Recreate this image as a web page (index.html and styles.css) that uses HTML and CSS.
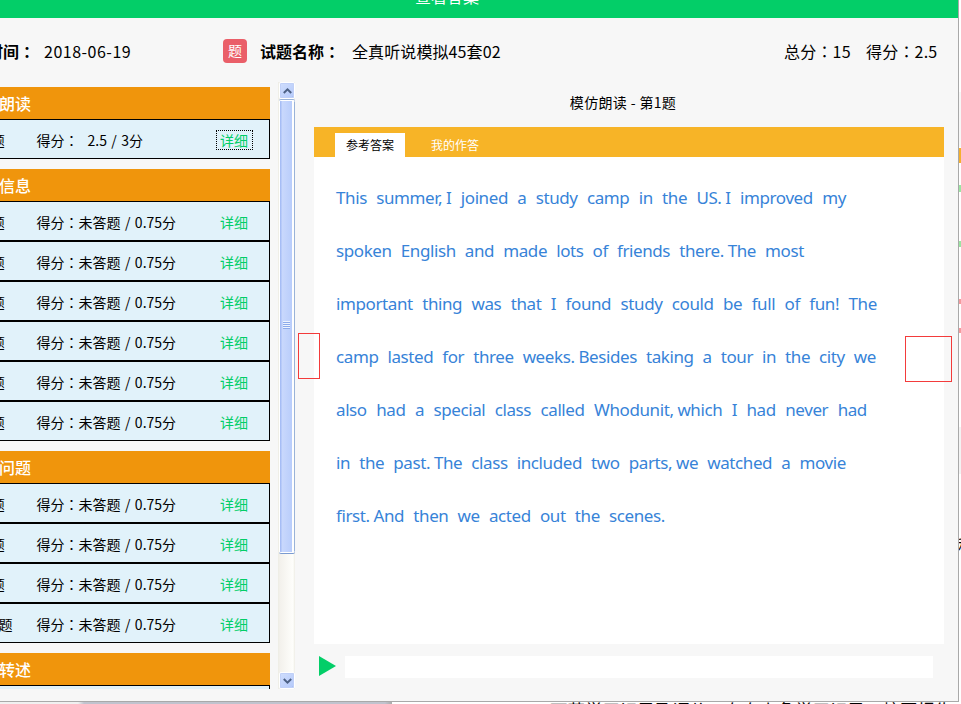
FILE: index.html
```html
<!DOCTYPE html>
<html lang="zh-CN">
<head>
<meta charset="utf-8">
<title>查看答案</title>
<link rel="stylesheet" href="styles.css">
</head>
<body>
<div class="window">
  <header class="titlebar"><span>查看答案</span></header>
  <div class="info">
    <b class="time-label">时间<i class="colon" lang="zh-TW">：</i></b>
    <span class="date">2018-06-19</span>
    <span class="badge">题</span>
    <b class="name-label">试题名称<i class="colon" lang="zh-TW">：</i></b>
    <span class="name">全真听说模拟45套02</span>
    <span class="total">总分<i class="colon" lang="zh-TW">：</i>15</span>
    <span class="got">得分<i class="colon" lang="zh-TW">：</i>2.5</span>
  </div>
  <div class="content">
    <div class="list">
      <section class="group">
        <h2>模仿朗读</h2>
        <div class="row"><span class="no">第1题</span><span class="score">得分<i class="colon" lang="zh-TW">：</i><span class="value">2.5 / 3分</span></span><a class="link focused">详细</a></div>
      </section>
      <section class="group">
        <h2>获取信息</h2>
        <div class="row"><span class="no">第1题</span><span class="score">得分<i class="colon" lang="zh-TW">：</i>未答题 / 0.75分</span><a class="link">详细</a></div>
        <div class="row"><span class="no">第2题</span><span class="score">得分<i class="colon" lang="zh-TW">：</i>未答题 / 0.75分</span><a class="link">详细</a></div>
        <div class="row"><span class="no">第3题</span><span class="score">得分<i class="colon" lang="zh-TW">：</i>未答题 / 0.75分</span><a class="link">详细</a></div>
        <div class="row"><span class="no">第4题</span><span class="score">得分<i class="colon" lang="zh-TW">：</i>未答题 / 0.75分</span><a class="link">详细</a></div>
        <div class="row"><span class="no">第5题</span><span class="score">得分<i class="colon" lang="zh-TW">：</i>未答题 / 0.75分</span><a class="link">详细</a></div>
        <div class="row"><span class="no">第6题</span><span class="score">得分<i class="colon" lang="zh-TW">：</i>未答题 / 0.75分</span><a class="link">详细</a></div>
      </section>
      <section class="group">
        <h2>回答问题</h2>
        <div class="row"><span class="no">第7题</span><span class="score">得分<i class="colon" lang="zh-TW">：</i>未答题 / 0.75分</span><a class="link">详细</a></div>
        <div class="row"><span class="no">第8题</span><span class="score">得分<i class="colon" lang="zh-TW">：</i>未答题 / 0.75分</span><a class="link">详细</a></div>
        <div class="row"><span class="no">第9题</span><span class="score">得分<i class="colon" lang="zh-TW">：</i>未答题 / 0.75分</span><a class="link">详细</a></div>
        <div class="row"><span class="no">第10题</span><span class="score">得分<i class="colon" lang="zh-TW">：</i>未答题 / 0.75分</span><a class="link">详细</a></div>
      </section>
      <section class="group">
        <h2>信息转述</h2>
        <div class="row"></div>
      </section>
    </div>
    <div class="scrollbar">
      <div class="sb-btn"><svg width="9" height="6" viewBox="0 0 9 6"><path d="M.8 5 4.5 1.4 8.2 5" fill="none" stroke="#4d6185" stroke-width="2"/></svg></div>
      <div class="thumb"><div class="grip"></div></div>
      <div class="track"></div>
      <div class="sb-btn"><svg width="9" height="6" viewBox="0 0 9 6"><path d="M.8 1 4.5 4.6 8.2 1" fill="none" stroke="#4d6185" stroke-width="2"/></svg></div>
    </div>
    <main class="detail">
      <h1>模仿朗读 - 第1题</h1>
      <nav class="tabs"><span class="tab active">参考答案</span><span class="tab">我的作答</span></nav>
      <article class="passage">
        <p class="w1"><span>This</span><span>summer, I</span><span>joined</span><span>a</span><span>study</span><span>camp</span><span>in</span><span>the</span><span>US. I</span><span>improved</span><span>my</span></p>
        <p class="w2"><span>spoken</span><span>English</span><span>and</span><span>made</span><span>lots</span><span>of</span><span>friends</span><span>there. The</span><span>most</span></p>
        <p class="w3"><span>important</span><span>thing</span><span>was</span><span>that</span><span>I</span><span>found</span><span>study</span><span>could</span><span>be</span><span>full</span><span>of</span><span>fun!</span><span>The</span></p>
        <p class="w4"><span>camp</span><span>lasted</span><span>for</span><span>three</span><span>weeks. Besides</span><span>taking</span><span>a</span><span>tour</span><span>in</span><span>the</span><span>city</span><span>we</span></p>
        <p class="w5"><span>also</span><span>had</span><span>a</span><span>special</span><span>class</span><span>called</span><span>Whodunit, which</span><span>I</span><span>had</span><span>never</span><span>had</span></p>
        <p class="w1"><span>in</span><span>the</span><span>past. The</span><span>class</span><span>included</span><span>two</span><span>parts, we</span><span>watched</span><span>a</span><span>movie</span></p>
        <p class="w7"><span>first. And</span><span>then</span><span>we</span><span>acted</span><span>out</span><span>the</span><span>scenes.</span></p>
      </article>
      <div class="player">
        <svg width="17" height="20" viewBox="0 0 17 20"><path d="M0 0 17 10 0 20Z" fill="#03ce68"/></svg>
        <div class="progress"></div>
      </div>
    </main>
  </div>
  <div class="mark mark-left"></div>
  <div class="mark mark-right"></div>
</div>
<div class="behind-right">
  <i class="bit gray-top"></i><i class="bit orange"></i><i class="bit green"></i><i class="bit green-2"></i><i class="bit red"></i><i class="bit red-2"></i><i class="bit gray"></i><span class="side-char">程</span>
</div>
<div class="behind-bottom"><div class="taskbar"></div><div class="under-text">可获学习记录及评价，在右上角学习记录，校园报告</div></div>
</body>
</html>
```

FILE: styles.css
```css
* { box-sizing: border-box; }
body {
  margin: 0;
  width: 961px;
  height: 704px;
  overflow: hidden;
  position: relative;
  background: #fff;
  color: #000;
  font-family: "Noto Sans CJK SC", sans-serif;
}
.window {
  position: relative;
  width: 959px;
  height: 702px;
  overflow: hidden;
  background: #f7f7f7;
  border-right: 1px solid #a9a9a9;
  border-bottom: 1px solid #a9a9a9;
}
.colon { font-style: normal; font-family: "Noto Sans CJK TC", sans-serif; }

.titlebar {
  height: 18px;
  background: #03ce68;
  color: #fff;
  font-size: 16px;
  line-height: 24px;
  display: flex;
  padding-left: 415px;
  overflow: hidden;
}
.titlebar span { margin-top: -16px; }

.info {
  height: 69px;
  padding-bottom: 4px;
  display: flex;
  align-items: center;
  font-size: 16px;
  line-height: 24px;
  white-space: nowrap;
}
.time-label { margin-left: -13px; width: 57px; flex: none; }
.date { width: 179px; letter-spacing: .5px; }
.badge {
  width: 24px;
  height: 24px;
  margin-top: 0;
  border-radius: 4px;
  background: #ea5f69;
  color: #fff;
  font-size: 14px;
  line-height: 22px;
  text-align: center;
}
.name-label { margin-left: 13px; width: 92px; }
.name { width: 432px; letter-spacing: .1px; }
.total { width: 82px; letter-spacing: .2px; }
.got { letter-spacing: .2px; }

.content { display: flex; align-items: flex-start; }
.list {
  width: 270px;
  height: 602px;
  overflow: hidden;
}
.group { margin-bottom: 10px; }
.group h2 {
  margin: 0;
  height: 32px;
  background: #f0950c;
  color: #fff;
  font-size: 16px;
  font-weight: 500;
  line-height: 33px;
  text-indent: -33px;
  white-space: nowrap;
}
.row {
  height: 40px;
  border: 1px solid #000;
  border-left: 0;
  background: #e1f2fa;
  display: flex;
  align-items: center;
  font-size: 14px;
  line-height: 20px;
  white-space: nowrap;
}
.no { margin-left: -31px; width: 67.5px; padding-top: 1px; }
.score { width: 179.5px; padding-top: 1px; word-spacing: 1.3px; }
.value { margin-left: 9px; }
.link { color: #03ce68; padding: 0 3px; margin-top: 2px; border: 1px dotted transparent; height: 20px; line-height: 18px; width: 37px; }
.link.focused { border-color: #000; }

.scrollbar {
  width: 17px;
  height: 607px;
  margin: -5px 0 0 8px;
  display: flex;
  flex-direction: column;
  background: linear-gradient(90deg, #eeede5, #f3f1ec 2px, #fefefb 15px, #eeede5);
}
.sb-btn {
  height: 17px;
  flex: none;
  margin-left: 1px;
  display: flex;
  align-items: center;
  justify-content: center;
  background: linear-gradient(135deg, #d0defd, #b4c9fa);
  border: 1px solid #fff;
  border-radius: 2px;
  box-shadow: inset 0 0 0 1px #c0d0f8, inset -1px -1px 0 #8ea9dc;
}
.thumb {
  height: 455px;
  padding-bottom: 3px;
  margin-left: 1px;
  flex: none;
  display: flex;
  align-items: center;
  justify-content: center;
  background: linear-gradient(90deg, #fff 1px, #a6bdf5 1px, #a6bdf5 2px, #c9d8fc 3px, #b9cdfb 13px, #fff 13px, #fff 15px, #9ab3d8 15px);
  border-top: 1px solid #9ab3d8;
  border-bottom: 1px solid #7b9bd0;
  border-radius: 2px;
  box-shadow: inset 0 1px #fff, inset 0 -1px #fff;
}
.grip { width: 7px; height: 8px; margin-right: 2px; background: repeating-linear-gradient(#eef4fe 0 1px, #8cabeb 1px 2px); }
.track { flex: 1; }

.detail { width: 630px; margin-left: 19px; }
.detail h1 {
  margin: 0;
  height: 40px;
  font-size: 14px;
  font-weight: 400;
  line-height: 31px;
  text-align: center;
  letter-spacing: .35px;
  padding-right: 12px;
}
.tabs {
  height: 30px;
  padding: 6px 0 0 21px;
  background: #f7b427;
  display: flex;
  font-size: 12px;
  line-height: 24px;
}
.tab { width: 70px; text-align: center; color: #fff; }
.tab.active { background: #fff; color: #000; margin-right: 15px; }
.passage {
  height: 487px;
  padding: 14px 22px 0;
  background: #fff;
  color: #3783d8;
  font-family: "Noto Sans", sans-serif;
  font-size: 17px;
  letter-spacing: -.4px;
}
.passage p {
  margin: 0;
  height: 53px;
  line-height: 53px;
  display: flex;
  justify-content: space-between;
  white-space: nowrap;
  word-spacing: -.2px;
}
.w1 { width: 510px; }
.w2 { width: 468px; }
.w3 { width: 541px; }
.w4 { width: 540px; }
.w5 { width: 531px; }
.w7 { width: 329px; }
.player { display: flex; align-items: flex-start; padding: 12px 11px 0 5px; }
.progress { height: 22px; margin-left: 9px; flex: 1; background: #fff; }

.mark { position: absolute; border: 1px solid #f33b3b; height: 46px; }
.mark-left { left: 298px; top: 333px; width: 22px; }
.mark-right { left: 905px; top: 336px; width: 47px; }

.behind-right { position: absolute; left: 959px; top: 0; width: 2px; height: 704px; overflow: hidden; }
.bit { position: absolute; left: 0; width: 2px; }
.gray-top { top: 92px; height: 55px; background: #f7f7f7; }
.orange { top: 148px; height: 15px; background: #f5af2d; }
.green { top: 185px; height: 7px; background: #9be5a2; }
.green-2 { top: 241px; height: 6px; background: #9be5a2; }
.red { top: 299px; height: 5px; background: #f59a9d; }
.red-2 { top: 328px; height: 5px; background: #f59a9d; }
.gray { top: 427px; height: 47px; background: #f3f3f3; }
.side-char { position: absolute; left: -1px; top: 533px; font-size: 17px; line-height: 24px; }
.behind-bottom { height: 2px; display: flex; overflow: hidden; }
.taskbar { width: 392px; flex: none; background: linear-gradient(90deg, #f0f0f0 78px, #c0c3ce 84px, #c0c3ce 385px, #aaa); }
.under-text { margin-left: 158px; font-size: 17.5px; line-height: 20px; margin-top: -2px; white-space: nowrap; }
```
